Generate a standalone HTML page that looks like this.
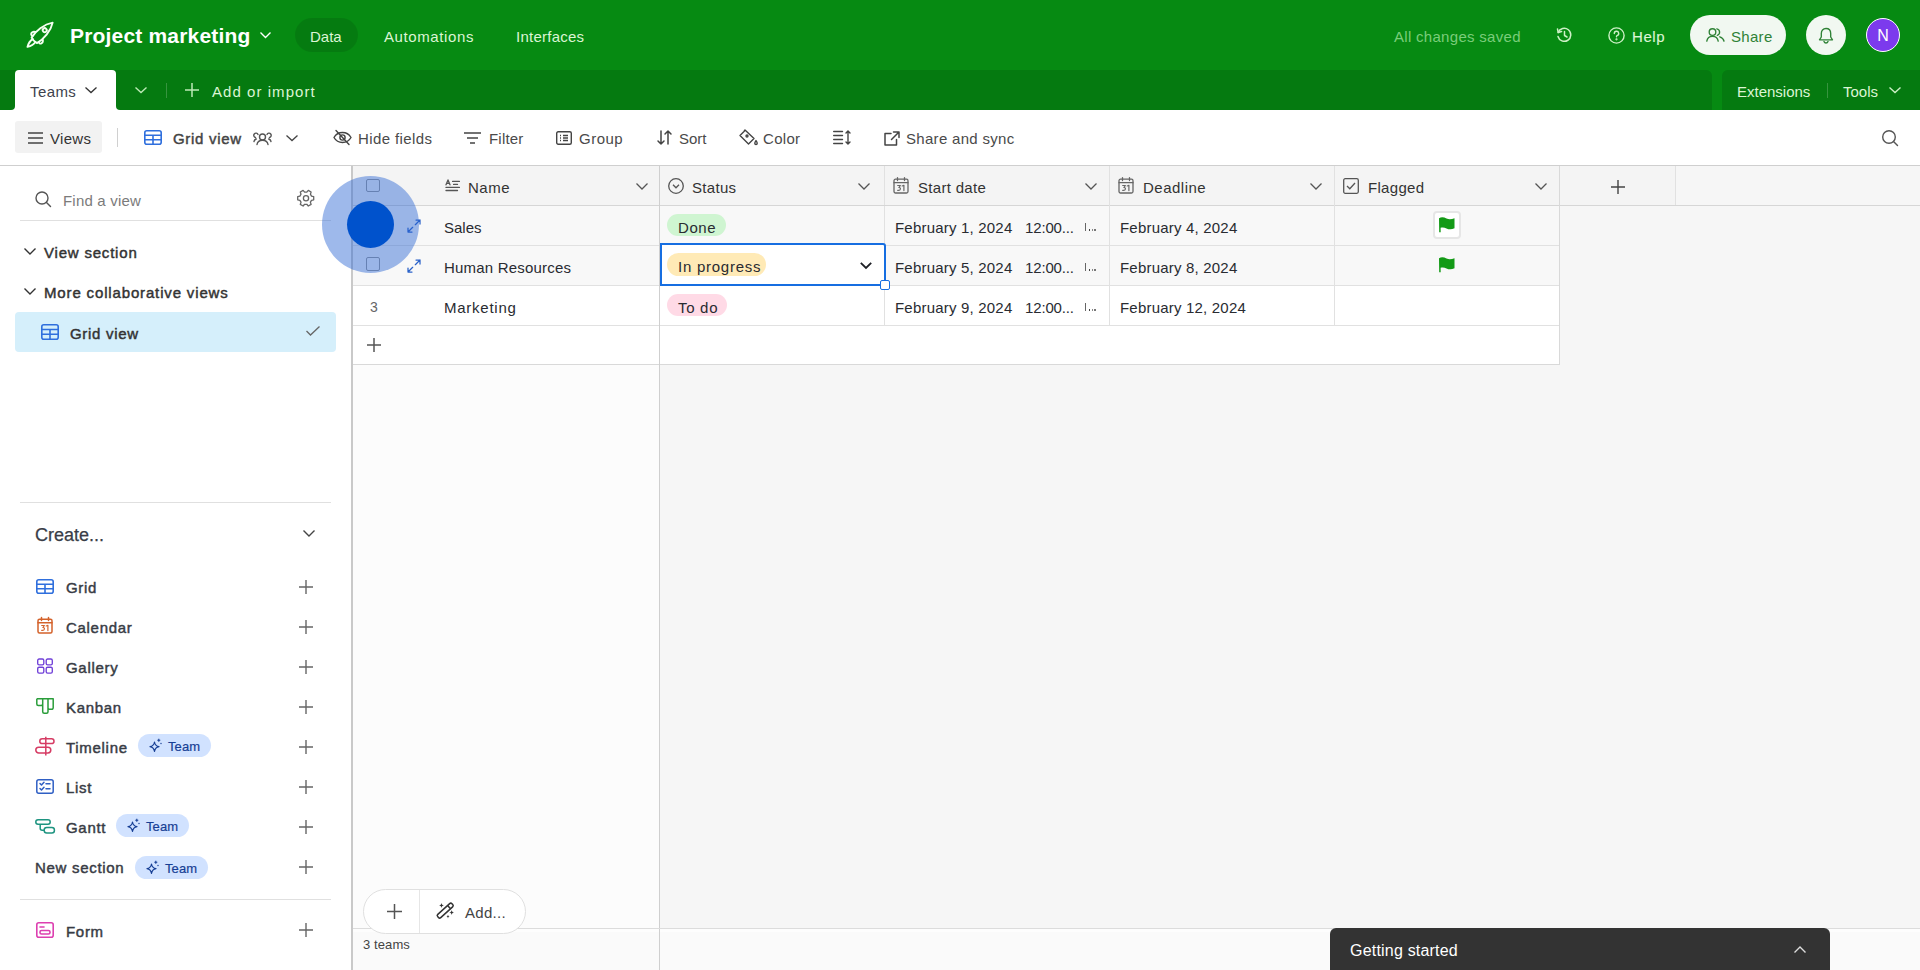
<!DOCTYPE html>
<html><head><meta charset="utf-8">
<style>
*{box-sizing:border-box;margin:0;padding:0}
html,body{width:1920px;height:970px;overflow:hidden;background:#fff;font-family:"Liberation Sans",sans-serif;}
.a{position:absolute}
.t{position:absolute;white-space:nowrap;font-size:15px;line-height:20px}
svg{position:absolute;overflow:visible}
#hdr{left:0;top:0;width:1920px;height:70px;background:#068a12}
.hl{color:#dcf5d4}
.sb{-webkit-text-stroke:0.45px currentColor;letter-spacing:0.7px}
</style></head><body>
<!-- HEADER -->
<div id="hdr" class="a"></div>
<!-- rocket -->
<svg style="left:22px;top:18px" width="36" height="34" viewBox="0 0 36 34" fill="none" stroke="#f4fff0" stroke-width="1.9" stroke-linejoin="round" stroke-linecap="round">
<g transform="translate(12.3 22.3) rotate(-44)">
 <path d="M0 -3.8 C7 -6 18.5 -4.8 25.5 0 C18.5 4.8 7 6 0 3.8 C-0.8 1.5 -0.8 -1.5 0 -3.8 Z"/>
 <circle cx="14.5" cy="0" r="2"/>
 <path d="M1.8 -4.4 C0.6 -7.6 5 -8.4 6.6 -5.2"/>
 <path d="M1.8 4.4 C0.6 7.6 5 8.4 6.6 5.2"/>
 <path d="M-0.3 -2 C-4 -2.8 -7.2 -1.4 -9.5 0 C-7.2 1.4 -4 2.8 -0.3 2"/>
</g>
</svg>
<div class="t" style="left:70px;top:23px;font-size:21px;line-height:26px;font-weight:700;color:#fff;letter-spacing:0.18px">Project marketing</div>
<svg style="left:260px;top:32px" width="11" height="6" viewBox="0 0 11 6" fill="none" stroke="#fff" stroke-width="1.4"><path d="M0.5 0.5 L5.5 5.5 L10.5 0.5"/></svg>
<div class="a" style="left:295px;top:18px;width:63px;height:34px;border-radius:17px;background:rgba(0,0,0,0.1)"></div>
<div class="t hl" style="left:310px;top:27px">Data</div>
<div class="t hl" style="left:384px;top:27px;letter-spacing:0.6px">Automations</div>
<div class="t hl" style="left:516px;top:27px;letter-spacing:0.25px">Interfaces</div>
<div class="t" style="left:1394px;top:27px;color:#7acd7a;letter-spacing:0.3px">All changes saved</div>
<!-- history -->
<svg style="left:1556px;top:27px" width="16" height="16" viewBox="0 0 16 16" fill="none" stroke="#cdf0c6" stroke-width="1.5" stroke-linecap="round" stroke-linejoin="round">
 <path d="M2.2 5.5 A6.5 6.5 0 1 1 2 9.5"/><path d="M1.5 2 L2.2 5.5 L5.6 4.6"/><path d="M8.5 4.5 V8.5 L11 10"/>
</svg>
<!-- help -->
<svg style="left:1608px;top:27px" width="17" height="17" viewBox="0 0 17 17" fill="none" stroke="#cdf0c6" stroke-width="1.4" stroke-linecap="round">
 <circle cx="8.5" cy="8.5" r="7.6"/><path d="M6.3 6.5 A2.2 2.2 0 1 1 9 8.6 C8.6 8.8 8.5 9.1 8.5 9.8"/><circle cx="8.5" cy="12.3" r="0.4" fill="#cdf0c6"/>
</svg>
<div class="t hl" style="left:1632px;top:27px;-webkit-text-stroke:0.15px currentColor;letter-spacing:0.6px">Help</div>
<div class="a" style="left:1690px;top:15px;width:96px;height:40px;border-radius:20px;background:#f1f8f1"></div>
<svg style="left:1706px;top:28px" width="19" height="14" viewBox="0 0 19 14" fill="none" stroke="#2f8236" stroke-width="1.35" stroke-linecap="round" stroke-linejoin="round"><circle cx="6.5" cy="4" r="3.3"/><path d="M0.8 13.2 C1.3 10 3.5 8.3 6.5 8.3 C9.5 8.3 11.7 10 12.2 13.2"/><path d="M10.8 0.9 A3.3 3.3 0 0 1 11.3 7.3"/><path d="M13.8 8.8 C15.8 9.5 17.6 11 18 13.2"/></svg>
<div class="t" style="left:1731px;top:27px;color:#2f8236;letter-spacing:0.3px">Share</div>
<div class="a" style="left:1806px;top:15px;width:40px;height:40px;border-radius:20px;background:#f1f8f1"></div>
<svg style="left:1818px;top:27px" width="16" height="17" viewBox="0 0 16 17" fill="none" stroke="#2f8236" stroke-width="1.35" stroke-linejoin="round" stroke-linecap="round">
 <path d="M8 1.5 C5 1.5 3.3 3.8 3.3 6.5 V10 L1.5 12.8 H14.5 L12.7 10 V6.5 C12.7 3.8 11 1.5 8 1.5 Z"/><path d="M6 14.5 C6.4 15.6 7.1 16 8 16 C8.9 16 9.6 15.6 10 14.5"/>
</svg>
<div class="a" style="left:1866px;top:18px;width:34px;height:34px;border-radius:17px;background:#7c3aed;border:1.5px solid #fff"></div>
<div class="t" style="left:1866px;top:26px;width:34px;text-align:center;color:#fff;font-size:16px">N</div>

<!-- TAB BAR -->
<div class="a" style="left:0;top:70px;width:1920px;height:40px;background:#068a12"></div>
<div class="a" style="left:0;top:100px;width:1712px;height:10px;background:#fff"></div>
<div class="a" style="left:15px;top:70px;width:101px;height:10px;background:#057a10"></div>
<div class="a" style="left:0;top:70px;width:15px;height:40px;background:#057a10;border-bottom-right-radius:4px"></div>
<div class="a" style="left:116px;top:70px;width:1596px;height:40px;background:#057a10;border-bottom-left-radius:4px;border-top-right-radius:6px"></div>
<div class="a" style="left:1722px;top:70px;width:198px;height:40px;background:#057a10;border-top-left-radius:6px"></div>
<div class="a" style="left:15px;top:70px;width:101px;height:40px;background:#fff;border-radius:4px 4px 0 0"></div>
<div class="t" style="left:30px;top:82px;color:#3d424d;letter-spacing:0.4px">Teams</div>
<svg style="left:85px;top:87px" width="12" height="6" viewBox="0 0 12 6" fill="none" stroke="#333" stroke-width="1.3"><path d="M0.5 0.5 L6 5.5 L11.5 0.5"/></svg>
<svg style="left:135px;top:87px" width="12" height="6" viewBox="0 0 12 6" fill="none" stroke="#bdeab6" stroke-width="1.4"><path d="M0.5 0.5 L6 5.5 L11.5 0.5"/></svg>
<div class="a" style="left:166px;top:83px;width:1px;height:15px;background:rgba(255,255,255,0.2)"></div>
<svg style="left:185px;top:83px" width="14" height="14" viewBox="0 0 14 14" fill="none" stroke="#bdeab6" stroke-width="1.5"><path d="M7 0 V14 M0 7 H14"/></svg>
<div class="t hl" style="left:212px;top:82px;letter-spacing:1.05px">Add or import</div>
<div class="t hl" style="left:1737px;top:82px">Extensions</div>
<div class="a" style="left:1827px;top:83px;width:1px;height:15px;background:rgba(255,255,255,0.2)"></div>
<div class="t hl" style="left:1843px;top:82px">Tools</div>
<svg style="left:1889px;top:87px" width="12" height="6" viewBox="0 0 12 6" fill="none" stroke="#cdf0c6" stroke-width="1.4"><path d="M0.5 0.5 L6 5.5 L11.5 0.5"/></svg>

<!-- TOOLBAR -->
<div class="a" style="left:0;top:165px;width:1920px;height:1px;background:#cfcfcf"></div>
<div class="a" style="left:15px;top:121px;width:87px;height:32px;border-radius:3px;background:#f2f2f2"></div>
<svg style="left:28px;top:132px" width="15" height="12" viewBox="0 0 15 12" fill="none" stroke="#444" stroke-width="1.6"><path d="M0 1 H15 M0 6 H15 M0 11 H15"/></svg>
<div class="t" style="left:50px;top:129px;color:#333;letter-spacing:0.3px">Views</div>
<div class="a" style="left:117px;top:128px;width:1px;height:19px;background:#d0d0d0"></div>
<svg style="left:144px;top:130px" width="18" height="15" viewBox="0 0 18 15" fill="none" stroke="#2f6fdd" stroke-width="1.6"><rect x="0.8" y="0.8" width="16.4" height="13.4" rx="2"/><path d="M0.8 5.3 H17.2 M0.8 9.8 H17.2 M9 5.3 V14.2"/></svg>
<div class="t sb" style="left:173px;top:129px;color:#444">Grid view</div>
<svg style="left:253px;top:131px" width="19" height="14" viewBox="0 0 19 14" fill="none" stroke="#555" stroke-width="1.4" stroke-linecap="round"><circle cx="9.5" cy="6" r="3"/><path d="M4 13.5 C4.5 10.5 6.5 9.3 9.5 9.3 C12.5 9.3 14.5 10.5 15 13.5"/><path d="M5 3.5 A2.2 2.2 0 1 0 2.5 6.5 M1 10.5 C1.3 9 2.2 8.3 3.3 8"/><path d="M14 3.5 A2.2 2.2 0 1 1 16.5 6.5 M18 10.5 C17.7 9 16.8 8.3 15.7 8"/></svg>
<svg style="left:286px;top:135px" width="12" height="6" viewBox="0 0 12 6" fill="none" stroke="#444" stroke-width="1.3"><path d="M0.5 0.5 L6 5.5 L11.5 0.5"/></svg>
<svg style="left:333px;top:130px" width="19" height="15" viewBox="0 0 19 15" fill="none" stroke="#444" stroke-width="1.4" stroke-linecap="round"><path d="M1 7.5 C3 4 6 2.5 9.5 2.5 C13 2.5 16 4 18 7.5 C16 11 13 12.5 9.5 12.5 C6 12.5 3 11 1 7.5 Z"/><circle cx="9.5" cy="7.5" r="2.6"/><path d="M3 0.5 L16 14.5"/></svg>
<div class="t" style="left:358px;top:129px;color:#4a4a4a;letter-spacing:0.4px">Hide fields</div>
<svg style="left:464px;top:132px" width="17" height="12" viewBox="0 0 17 12" fill="none" stroke="#444" stroke-width="1.5"><path d="M0 1 H17 M3 6 H14 M6 11 H11"/></svg>
<div class="t" style="left:489px;top:129px;color:#4a4a4a;letter-spacing:0.2px">Filter</div>
<svg style="left:556px;top:131px" width="16" height="14" viewBox="0 0 16 14" fill="none" stroke="#444" stroke-width="1.4"><rect x="0.7" y="0.7" width="14.6" height="12.6" rx="1.5"/><path d="M4 4.5 H5 M4 7 H5 M4 9.5 H5 M7 4.5 H12 M7 7 H12 M7 9.5 H12"/></svg>
<div class="t" style="left:579px;top:129px;color:#4a4a4a;letter-spacing:0.5px">Group</div>
<svg style="left:657px;top:130px" width="15" height="15" viewBox="0 0 15 15" fill="none" stroke="#444" stroke-width="1.5" stroke-linecap="round" stroke-linejoin="round"><path d="M4 1 V14 M1 11 L4 14 L7 11 M11 14 V1 M8 4 L11 1 L14 4"/></svg>
<div class="t" style="left:679px;top:129px;color:#4a4a4a">Sort</div>
<svg style="left:739px;top:129px" width="19" height="17" viewBox="0 0 19 17" fill="none" stroke="#444" stroke-width="1.4" stroke-linejoin="round"><path d="M6 1 L15 9.5 L9.5 15 L1 6.5 L5 2.5 Z"/><circle cx="8" cy="7" r="1"/><path d="M17 11.5 C17.8 12.8 18.2 13.5 18.2 14.3 A1.2 1.2 0 0 1 15.8 14.3 C15.8 13.5 16.2 12.8 17 11.5 Z"/></svg>
<div class="t" style="left:763px;top:129px;color:#4a4a4a;letter-spacing:0.3px">Color</div>
<svg style="left:833px;top:130px" width="18" height="15" viewBox="0 0 18 15" fill="none" stroke="#444" stroke-width="1.4" stroke-linecap="round"><path d="M0.7 1.5 H9.5 M0.7 5.5 H9.5 M0.7 9.5 H9.5 M0.7 13.5 H9.5 M15 1 V14 M13 3 L15 1 L17 3 M13 12 L15 14 L17 12"/></svg>
<svg style="left:884px;top:131px" width="16" height="15" viewBox="0 0 16 15" fill="none" stroke="#444" stroke-width="1.5" stroke-linecap="round" stroke-linejoin="round"><path d="M7 2.5 H1 V14 H12.5 V8.5"/><path d="M9.5 1 H15 V6.5 M15 1 L7.5 8.5"/></svg>
<div class="t" style="left:906px;top:129px;color:#4a4a4a;letter-spacing:0.3px">Share and sync</div>
<svg style="left:1882px;top:130px" width="17" height="17" viewBox="0 0 17 17" fill="none" stroke="#555" stroke-width="1.4" stroke-linecap="round"><circle cx="7" cy="7" r="6.3"/><path d="M11.5 11.5 L15.5 15.5"/></svg>


<!-- SIDEBAR -->
<div class="a" style="left:351px;top:166px;width:2px;height:804px;background:#c9c9c9"></div>
<svg style="left:35px;top:191px" width="17" height="16" viewBox="0 0 17 16" fill="none" stroke="#555" stroke-width="1.4" stroke-linecap="round"><circle cx="7" cy="7" r="6"/><path d="M11.5 11.5 L15.5 15.5"/></svg>
<div class="t" style="left:63px;top:191px;color:#7b7b7b;letter-spacing:0.2px">Find a view</div>
<svg style="left:297px;top:190px" width="18" height="17" viewBox="0 0 18 17" fill="none" stroke="#666" stroke-width="1.3" stroke-linejoin="round"><g transform="rotate(90 9 8.2)"><path d="M7.4 1 H10.6 L11.1 3.2 L13 4.3 L15.2 3.6 L16.8 6.4 L15.1 7.9 V10.1 L16.8 11.6 L15.2 14.4 L13 13.7 L11.1 14.8 L10.6 17 H7.4 L6.9 14.8 L5 13.7 L2.8 14.4 L1.2 11.6 L2.9 10.1 V7.9 L1.2 6.4 L2.8 3.6 L5 4.3 L6.9 3.2 Z" transform="translate(0,-0.5)"/></g><circle cx="9" cy="8.2" r="2.6"/></svg>
<div class="a" style="left:20px;top:220px;width:311px;height:1px;background:#e0e0e0"></div>
<svg style="left:24px;top:248px" width="12" height="7" viewBox="0 0 12 7" fill="none" stroke="#333" stroke-width="1.4"><path d="M0.5 0.5 L6 6 L11.5 0.5"/></svg>
<div class="t sb" style="left:44px;top:243px;color:#333;letter-spacing:0.8px">View section</div>
<svg style="left:24px;top:288px" width="12" height="7" viewBox="0 0 12 7" fill="none" stroke="#333" stroke-width="1.4"><path d="M0.5 0.5 L6 6 L11.5 0.5"/></svg>
<div class="t sb" style="left:44px;top:283px;color:#333;letter-spacing:0.85px">More collaborative views</div>
<div class="a" style="left:15px;top:312px;width:321px;height:40px;border-radius:4px;background:#d5effb"></div>
<svg style="left:41px;top:324px" width="18" height="16" viewBox="0 0 18 16" fill="none" stroke="#2f6fdd" stroke-width="1.6"><rect x="0.8" y="0.8" width="16.4" height="14.4" rx="2"/><path d="M0.8 5.5 H17.2 M0.8 10.3 H17.2 M9 5.5 V15.2"/></svg>
<div class="t sb" style="left:70px;top:324px;color:#333">Grid view</div>
<svg style="left:306px;top:326px" width="14" height="10" viewBox="0 0 14 10" fill="none" stroke="#666" stroke-width="1.3"><path d="M0.5 5 L4.5 9 L13.5 0.5"/></svg>
<div class="a" style="left:20px;top:502px;width:311px;height:1px;background:#e0e0e0"></div>
<div class="t" style="left:35px;top:524px;color:#393d47;font-size:18px;line-height:22px;-webkit-text-stroke:0.25px currentColor">Create...</div>
<svg style="left:303px;top:530px" width="12" height="7" viewBox="0 0 12 7" fill="none" stroke="#444" stroke-width="1.4"><path d="M0.5 0.5 L6 6 L11.5 0.5"/></svg>
<svg style="left:36px;top:579px" width="18" height="15" viewBox="0 0 18 15" fill="none" stroke="#2f6fdd" stroke-width="1.6"><rect x="0.8" y="0.8" width="16.4" height="13.4" rx="2"/><path d="M0.8 5.3 H17.2 M0.8 9.8 H17.2 M9 5.3 V14.2"/></svg><div class="t sb" style="left:66px;top:578px;color:#383c45">Grid</div><svg style="left:299px;top:580px" width="14" height="14" viewBox="0 0 14 14" fill="none" stroke="#666" stroke-width="1.4"><path d="M7 0 V14 M0 7 H14"/></svg>
<svg style="left:37px;top:617px" width="16" height="17" viewBox="0 0 16 17" fill="none" stroke="#d4622b" stroke-width="1.5" stroke-linejoin="round" stroke-linecap="round"><rect x="1" y="2.2" width="14" height="13.8" rx="1.5"/><path d="M1 5.7 H15 M4.5 0.6 V3.5 M11.5 0.6 V3.5"/><path d="M4.7 8.5 H7.4 L5.9 10.5 C8 10.3 8.2 13.7 4.7 13.3 M9.2 9 L10.9 8.3 V13.6" stroke-width="1.2"/></svg><div class="t sb" style="left:66px;top:618px;color:#383c45">Calendar</div><svg style="left:299px;top:620px" width="14" height="14" viewBox="0 0 14 14" fill="none" stroke="#666" stroke-width="1.4"><path d="M7 0 V14 M0 7 H14"/></svg>
<svg style="left:37px;top:658px" width="16" height="16" viewBox="0 0 16 16" fill="none" stroke="#7040d8" stroke-width="1.35"><rect x="0.7" y="1" width="6.1" height="5.9" rx="1.4"/><rect x="9.2" y="1" width="6.1" height="5.9" rx="1.4"/><rect x="0.7" y="9.2" width="6.1" height="5.9" rx="1.4"/><rect x="9.2" y="9.2" width="6.1" height="5.9" rx="1.4"/></svg><div class="t sb" style="left:66px;top:658px;color:#383c45">Gallery</div><svg style="left:299px;top:660px" width="14" height="14" viewBox="0 0 14 14" fill="none" stroke="#666" stroke-width="1.4"><path d="M7 0 V14 M0 7 H14"/></svg>
<svg style="left:36px;top:698px" width="18" height="16" viewBox="0 0 18 16" fill="none" stroke="#2a9d3a" stroke-width="1.5" stroke-linejoin="round"><path d="M0.8 0.8 H17.2 V9.8 A1.5 1.5 0 0 1 15.7 11.3 H13.5 A1.5 1.5 0 0 1 12 9.8 V0.8 M6.7 0.8 V6 A1.5 1.5 0 0 1 5.2 7.5 H2.3 A1.5 1.5 0 0 1 0.8 6 V0.8 M6.7 0.8 V13.7 A1.5 1.5 0 0 0 8.2 15.2 H10.5 A1.5 1.5 0 0 0 12 13.7 V0.8"/></svg><div class="t sb" style="left:66px;top:698px;color:#383c45">Kanban</div><svg style="left:299px;top:700px" width="14" height="14" viewBox="0 0 14 14" fill="none" stroke="#666" stroke-width="1.4"><path d="M7 0 V14 M0 7 H14"/></svg>
<svg style="left:35px;top:737px" width="20" height="19" viewBox="0 0 20 19" fill="none" stroke="#d63c64" stroke-width="1.5" stroke-linejoin="round"><rect x="4.8" y="1.8" width="14.2" height="4.8" rx="2.4"/><rect x="0.8" y="10.2" width="15" height="5.8" rx="2.9"/><path d="M10.8 -0.3 V18.6"/></svg><div class="t sb" style="left:66px;top:738px;color:#383c45">Timeline</div><svg style="left:299px;top:740px" width="14" height="14" viewBox="0 0 14 14" fill="none" stroke="#666" stroke-width="1.4"><path d="M7 0 V14 M0 7 H14"/></svg>
<svg style="left:36px;top:779px" width="18" height="15" viewBox="0 0 18 15" fill="none" stroke="#2f5fc4" stroke-width="1.5" stroke-linecap="round" stroke-linejoin="round"><rect x="0.8" y="0.8" width="16.4" height="13.4" rx="2"/><path d="M4 4.5 L5.5 6 L8 3.2 M4 9.5 L5.5 11 L8 8.2 M10 4.8 H14 M10 9.8 H14"/></svg><div class="t sb" style="left:66px;top:778px;color:#383c45">List</div><svg style="left:299px;top:780px" width="14" height="14" viewBox="0 0 14 14" fill="none" stroke="#666" stroke-width="1.4"><path d="M7 0 V14 M0 7 H14"/></svg>
<svg style="left:35px;top:819px" width="20" height="15" viewBox="0 0 20 15" fill="none" stroke="#1e9480" stroke-width="1.5"><rect x="0.8" y="0.8" width="14.4" height="4.4" rx="2.2"/><rect x="9.2" y="8.4" width="10.2" height="5.6" rx="2.5"/><path d="M5.2 5.2 V9.2 A2 2 0 0 0 7.2 11.2 H9.2"/></svg><div class="t sb" style="left:66px;top:818px;color:#383c45">Gantt</div><svg style="left:299px;top:820px" width="14" height="14" viewBox="0 0 14 14" fill="none" stroke="#666" stroke-width="1.4"><path d="M7 0 V14 M0 7 H14"/></svg>
<div class="a" style="left:138px;top:734px;width:73px;height:23px;border-radius:12px;background:#d1e2ff"></div><svg style="left:149px;top:739px" width="14" height="14" viewBox="0 0 14 14" fill="none" stroke="#173f95" stroke-width="1.2" stroke-linejoin="round"><path d="M5.5 3 C6 6 7 7.2 10 7.7 C7 8.2 6 9.4 5.5 12.5 C5 9.4 4 8.2 1 7.7 C4 7.2 5 6 5.5 3 Z"/><path d="M9.8 -0.2 V2.8 M8.3 1.3 H11.3" stroke-width="1.1"/><circle cx="12" cy="4.5" r="0.7" fill="#173f95" stroke="none"/></svg><div class="t" style="left:168px;top:737px;font-size:13px;line-height:19px;color:#173f95;letter-spacing:0.1px;-webkit-text-stroke:0.2px currentColor">Team</div><div class="a" style="left:116px;top:814px;width:73px;height:23px;border-radius:12px;background:#d1e2ff"></div><svg style="left:127px;top:819px" width="14" height="14" viewBox="0 0 14 14" fill="none" stroke="#173f95" stroke-width="1.2" stroke-linejoin="round"><path d="M5.5 3 C6 6 7 7.2 10 7.7 C7 8.2 6 9.4 5.5 12.5 C5 9.4 4 8.2 1 7.7 C4 7.2 5 6 5.5 3 Z"/><path d="M9.8 -0.2 V2.8 M8.3 1.3 H11.3" stroke-width="1.1"/><circle cx="12" cy="4.5" r="0.7" fill="#173f95" stroke="none"/></svg><div class="t" style="left:146px;top:817px;font-size:13px;line-height:19px;color:#173f95;letter-spacing:0.1px;-webkit-text-stroke:0.2px currentColor">Team</div><div class="t sb" style="left:35px;top:858px;color:#383c45">New section</div><div class="a" style="left:135px;top:856px;width:73px;height:23px;border-radius:12px;background:#d1e2ff"></div><svg style="left:146px;top:861px" width="14" height="14" viewBox="0 0 14 14" fill="none" stroke="#173f95" stroke-width="1.2" stroke-linejoin="round"><path d="M5.5 3 C6 6 7 7.2 10 7.7 C7 8.2 6 9.4 5.5 12.5 C5 9.4 4 8.2 1 7.7 C4 7.2 5 6 5.5 3 Z"/><path d="M9.8 -0.2 V2.8 M8.3 1.3 H11.3" stroke-width="1.1"/><circle cx="12" cy="4.5" r="0.7" fill="#173f95" stroke="none"/></svg><div class="t" style="left:165px;top:859px;font-size:13px;line-height:19px;color:#173f95;letter-spacing:0.1px;-webkit-text-stroke:0.2px currentColor">Team</div><svg style="left:299px;top:860px" width="14" height="14" viewBox="0 0 14 14" fill="none" stroke="#666" stroke-width="1.4"><path d="M7 0 V14 M0 7 H14"/></svg>
<div class="a" style="left:20px;top:899px;width:311px;height:1px;background:#e0e0e0"></div>
<svg style="left:36px;top:922px" width="18" height="16" viewBox="0 0 18 16" fill="none" stroke="#dd3fb0" stroke-width="1.6" stroke-linecap="round"><rect x="0.8" y="0.8" width="16.4" height="14.4" rx="2"/><path d="M4 5 H8"/><rect x="4" y="8.5" width="10" height="3.5" rx="1.5"/></svg><div class="t sb" style="left:66px;top:922px;color:#383c45">Form</div><svg style="left:299px;top:923px" width="14" height="14" viewBox="0 0 14 14" fill="none" stroke="#666" stroke-width="1.4"><path d="M7 0 V14 M0 7 H14"/></svg>


<!-- GRID -->
<div class="a" style="left:353px;top:166px;width:1567px;height:804px;background:#f6f6f6"></div>
<div class="a" style="left:353px;top:166px;width:306px;height:804px;background:#fcfcfc"></div>
<div class="a" style="left:353px;top:929px;width:1567px;height:41px;background:#fafafa"></div><div class="a" style="left:353px;top:929px;width:1567px;height:3px;background:#fdfdfd"></div>
<div class="a" style="left:353px;top:166px;width:1322px;height:39px;background:#f4f4f4"></div>
<div class="a" style="left:353px;top:205px;width:1567px;height:1px;background:#d6d6d6"></div>
<div class="a" style="left:353px;top:206px;width:1206px;height:79px;background:#f8f8f8"></div>
<div class="a" style="left:353px;top:286px;width:1206px;height:78px;background:#fff"></div>
<div class="a" style="left:353px;top:245px;width:1206px;height:1px;background:#e1e1e1"></div>
<div class="a" style="left:353px;top:285px;width:1206px;height:1px;background:#e1e1e1"></div>
<div class="a" style="left:353px;top:325px;width:1206px;height:1px;background:#e1e1e1"></div>
<div class="a" style="left:353px;top:364px;width:1206px;height:1px;background:#d9d9d9"></div>
<div class="a" style="left:659px;top:166px;width:1px;height:804px;background:#cfcfcf"></div>
<div class="a" style="left:884px;top:166px;width:1px;height:159px;background:#e1e1e1"></div>
<div class="a" style="left:1109px;top:166px;width:1px;height:159px;background:#e1e1e1"></div>
<div class="a" style="left:1334px;top:166px;width:1px;height:159px;background:#e1e1e1"></div>
<div class="a" style="left:1559px;top:166px;width:1px;height:199px;background:#d9d9d9"></div>
<div class="a" style="left:1675px;top:166px;width:1px;height:39px;background:#e1e1e1"></div>
<div class="a" style="left:884px;top:205px;width:1px;height:1px;background:#d6d6d6"></div>
<div class="a" style="left:353px;top:928px;width:1567px;height:1px;background:#dcdcdc"></div>

<!-- header cells -->
<div class="a" style="left:366px;top:179px;width:14px;height:13px;border:1.5px solid #9a9a9a;border-radius:2px"></div>
<svg style="left:445px;top:179px" width="15" height="13" viewBox="0 0 15 13" fill="none" stroke="#555" stroke-width="1.3" stroke-linecap="round"><path d="M1 5.8 L3 0.9 L5 5.8 M1.7 4.3 H4.3" stroke-linejoin="round"/><path d="M7.6 2.4 H14.4 M8.6 5.4 H12.5 M1 8.4 H14.4 M1 11.5 H12.5"/></svg>
<div class="t" style="left:468px;top:178px;color:#333;letter-spacing:0.5px">Name</div>
<svg style="left:636px;top:183px" width="12" height="7" viewBox="0 0 12 7" fill="none" stroke="#555" stroke-width="1.3"><path d="M0.5 0.5 L6 6 L11.5 0.5"/></svg>
<svg style="left:668px;top:178px" width="16" height="16" viewBox="0 0 16 16" fill="none" stroke="#555" stroke-width="1.3"><circle cx="8" cy="8" r="7.3"/><path d="M5 6.8 L8 9.8 L11 6.8"/></svg>
<div class="t" style="left:692px;top:178px;color:#333;letter-spacing:0.3px">Status</div>
<svg style="left:858px;top:183px" width="12" height="7" viewBox="0 0 12 7" fill="none" stroke="#555" stroke-width="1.3"><path d="M0.5 0.5 L6 6 L11.5 0.5"/></svg>
<svg style="left:893px;top:177px" width="16" height="17" viewBox="0 0 16 17" fill="none" stroke="#666" stroke-width="1.3" stroke-linejoin="round" stroke-linecap="round"><rect x="1" y="2.2" width="14" height="13.8" rx="1.5"/><path d="M1 5.7 H15 M4.5 0.6 V3.5 M11.5 0.6 V3.5"/><path d="M4.7 8.5 H7.4 L5.9 10.5 C8 10.3 8.2 13.7 4.7 13.3 M9.2 9 L10.9 8.3 V13.6" stroke-width="1.2"/></svg>
<div class="t" style="left:918px;top:178px;color:#333;letter-spacing:0.3px">Start date</div>
<svg style="left:1085px;top:183px" width="12" height="7" viewBox="0 0 12 7" fill="none" stroke="#555" stroke-width="1.3"><path d="M0.5 0.5 L6 6 L11.5 0.5"/></svg>
<svg style="left:1118px;top:177px" width="16" height="17" viewBox="0 0 16 17" fill="none" stroke="#666" stroke-width="1.3" stroke-linejoin="round" stroke-linecap="round"><rect x="1" y="2.2" width="14" height="13.8" rx="1.5"/><path d="M1 5.7 H15 M4.5 0.6 V3.5 M11.5 0.6 V3.5"/><path d="M4.7 8.5 H7.4 L5.9 10.5 C8 10.3 8.2 13.7 4.7 13.3 M9.2 9 L10.9 8.3 V13.6" stroke-width="1.2"/></svg>
<div class="t" style="left:1143px;top:178px;color:#333;letter-spacing:0.5px">Deadline</div>
<svg style="left:1310px;top:183px" width="12" height="7" viewBox="0 0 12 7" fill="none" stroke="#555" stroke-width="1.3"><path d="M0.5 0.5 L6 6 L11.5 0.5"/></svg>
<svg style="left:1343px;top:178px" width="16" height="16" viewBox="0 0 16 16" fill="none" stroke="#555" stroke-width="1.3"><rect x="0.7" y="0.7" width="14.6" height="14.6" rx="1.5"/><path d="M4 8 L6.8 10.8 L12 5"/></svg>
<div class="t" style="left:1368px;top:178px;color:#333;letter-spacing:0.3px">Flagged</div>
<svg style="left:1535px;top:183px" width="12" height="7" viewBox="0 0 12 7" fill="none" stroke="#555" stroke-width="1.3"><path d="M0.5 0.5 L6 6 L11.5 0.5"/></svg>
<svg style="left:1611px;top:180px" width="14" height="14" viewBox="0 0 14 14" fill="none" stroke="#444" stroke-width="1.4"><path d="M7 0 V14 M0 7 H14"/></svg>
<!-- rows -->
<svg style="left:407px;top:219px" width="14" height="14" viewBox="0 0 14 14" fill="none" stroke="#2a62c9" stroke-width="1.25" stroke-linecap="round" stroke-linejoin="round"><path d="M9 1 H13 V5 M13 1 L8.3 5.7 M5 13 H1 V9 M1 13 L5.7 8.3"/></svg>
<div class="t" style="left:444px;top:218px;color:#292b31">Sales</div>
<div class="a" style="left:366px;top:257px;width:14px;height:14px;border:1.5px solid #9a9a9a;border-radius:2px"></div>
<svg style="left:407px;top:259px" width="14" height="14" viewBox="0 0 14 14" fill="none" stroke="#2a62c9" stroke-width="1.25" stroke-linecap="round" stroke-linejoin="round"><path d="M9 1 H13 V5 M13 1 L8.3 5.7 M5 13 H1 V9 M1 13 L5.7 8.3"/></svg>
<div class="t" style="left:444px;top:258px;color:#292b31;letter-spacing:0.2px">Human Resources</div>
<div class="t" style="left:370px;top:298px;color:#666;font-size:14px;line-height:18px">3</div>
<div class="t" style="left:444px;top:298px;color:#292b31;letter-spacing:0.75px">Marketing</div>
<svg style="left:367px;top:338px" width="14" height="14" viewBox="0 0 14 14" fill="none" stroke="#555" stroke-width="1.5"><path d="M7 0 V14 M0 7 H14"/></svg>
<!-- status -->
<div class="a" style="left:667px;top:214px;width:59px;height:22px;border-radius:11px;background:#cff5d1"></div>
<div class="t" style="left:678px;top:219px;color:#292b31;line-height:18px;letter-spacing:0.6px">Done</div>
<div class="a" style="left:660px;top:243px;width:226px;height:43px;border:2px solid #166ee1;border-radius:0 3px 0 0;background:#fff"></div>
<div class="a" style="left:667px;top:253px;width:99px;height:23px;border-radius:11.5px;background:#ffeab6"></div>
<div class="t" style="left:678px;top:258px;color:#292b31;line-height:18px;letter-spacing:0.75px">In progress</div>
<svg style="left:860px;top:262px" width="12" height="7" viewBox="0 0 12 7" fill="none" stroke="#1d1f25" stroke-width="1.8"><path d="M0.8 0.8 L6 6 L11.2 0.8"/></svg>
<div class="a" style="left:880px;top:280px;width:10px;height:10px;border:1.5px solid #166ee1;border-radius:2px;background:#fff"></div>
<div class="a" style="left:667px;top:294px;width:60px;height:22px;border-radius:11px;background:#ffdae6"></div>
<div class="t" style="left:678px;top:299px;color:#292b31;line-height:18px;letter-spacing:0.7px">To do</div>
<!-- dates -->
<div class="t" style="left:895px;top:218px;color:#292b31;letter-spacing:0.2px">February 1, 2024</div><div class="t" style="left:1025px;top:218px;color:#292b31;letter-spacing:-0.15px">12:00...</div><div class="a" style="left:1085px;top:223px;width:1.3px;height:8px;background:#666"></div><div class="a" style="left:1089px;top:229px;width:1.4px;height:2px;background:#444"></div><div class="a" style="left:1091.6px;top:229px;width:1.4px;height:2px;background:#888"></div><div class="a" style="left:1094.2px;top:229px;width:1.4px;height:2px;background:#777"></div><div class="t" style="left:1120px;top:218px;color:#292b31;letter-spacing:0.2px">February 4, 2024</div>
<div class="t" style="left:895px;top:258px;color:#292b31;letter-spacing:0.2px">February 5, 2024</div><div class="t" style="left:1025px;top:258px;color:#292b31;letter-spacing:-0.15px">12:00...</div><div class="a" style="left:1085px;top:263px;width:1.3px;height:8px;background:#666"></div><div class="a" style="left:1089px;top:269px;width:1.4px;height:2px;background:#444"></div><div class="a" style="left:1091.6px;top:269px;width:1.4px;height:2px;background:#888"></div><div class="a" style="left:1094.2px;top:269px;width:1.4px;height:2px;background:#777"></div><div class="t" style="left:1120px;top:258px;color:#292b31;letter-spacing:0.2px">February 8, 2024</div>
<div class="t" style="left:895px;top:298px;color:#292b31;letter-spacing:0.2px">February 9, 2024</div><div class="t" style="left:1025px;top:298px;color:#292b31;letter-spacing:-0.15px">12:00...</div><div class="a" style="left:1085px;top:303px;width:1.3px;height:8px;background:#666"></div><div class="a" style="left:1089px;top:309px;width:1.4px;height:2px;background:#444"></div><div class="a" style="left:1091.6px;top:309px;width:1.4px;height:2px;background:#888"></div><div class="a" style="left:1094.2px;top:309px;width:1.4px;height:2px;background:#777"></div><div class="t" style="left:1120px;top:298px;color:#292b31;letter-spacing:0.2px">February 12, 2024</div>
<div class="a" style="left:1433px;top:211px;width:28px;height:28px;border:2px solid #e6e6e6;border-radius:4px;background:#fff"></div>
<svg style="left:1439px;top:217px" width="17" height="16" viewBox="0 0 17 16" fill="#139a16"><path d="M0 1.2 C2.5 -0.4 5 0.2 7.5 1.4 C10 2.6 12.5 2.2 15.5 1.2 V11.2 C12.5 12.8 10 12.6 7.5 11.4 C5.5 10.4 3.5 10.2 1.6 10.8 L1.7 15.2 H0.2 Z"/></svg>
<svg style="left:1439px;top:257px" width="17" height="16" viewBox="0 0 17 16" fill="#139a16"><path d="M0 1.2 C2.5 -0.4 5 0.2 7.5 1.4 C10 2.6 12.5 2.2 15.5 1.2 V11.2 C12.5 12.8 10 12.6 7.5 11.4 C5.5 10.4 3.5 10.2 1.6 10.8 L1.7 15.2 H0.2 Z"/></svg>
<!-- footer -->
<div class="a" style="left:363px;top:889px;width:163px;height:45px;border:1px solid #e0e0e0;border-radius:23px;background:#fff"></div>
<div class="a" style="left:419px;top:890px;width:1px;height:43px;background:#e6e6e6"></div>
<svg style="left:387px;top:904px" width="15" height="15" viewBox="0 0 15 15" fill="none" stroke="#555" stroke-width="1.5"><path d="M7.5 0 V15 M0 7.5 H15"/></svg>
<svg style="left:430px;top:898px" width="30" height="26" viewBox="0 0 30 26" fill="none" stroke="#333" stroke-width="1.5" stroke-linejoin="round"><g transform="translate(15.2 12.6) rotate(-42)"><rect x="-9.6" y="-2.2" width="19.2" height="4.4" rx="1.6"/><path d="M5.2 -2.2 V2.2"/></g><path d="M11.5 5.1 C12.028 6.9719999999999995 12.028 6.9719999999999995 13.9 7.5 C12.028 8.028 12.028 8.028 11.5 9.9 C10.972 8.028 10.972 8.028 9.1 7.5 C10.972 6.9719999999999995 10.972 6.9719999999999995 11.5 5.1 Z M21.7 12.1 C22.25 14.049999999999999 22.25 14.049999999999999 24.2 14.6 C22.25 15.15 22.25 15.15 21.7 17.1 C21.15 15.15 21.15 15.15 19.2 14.6 C21.15 14.049999999999999 21.15 14.049999999999999 21.7 12.1 Z M18 16.700000000000003 C18.418 18.182000000000002 18.418 18.182000000000002 19.9 18.6 C18.418 19.018 18.418 19.018 18 20.5 C17.582 19.018 17.582 19.018 16.1 18.6 C17.582 18.182000000000002 17.582 18.182000000000002 18 16.700000000000003 Z" fill="#333" stroke="none"/></svg>
<div class="t" style="left:465px;top:903px;color:#444;letter-spacing:0.3px">Add...</div>
<div class="t" style="left:363px;top:936px;color:#444;font-size:13px;line-height:18px;letter-spacing:0.1px">3 teams</div>
<div class="a" style="left:1330px;top:928px;width:500px;height:42px;background:#333;border-radius:6px 6px 0 0"></div>
<div class="t" style="left:1350px;top:941px;color:#fff;font-size:16px;line-height:20px;letter-spacing:0.2px">Getting started</div>
<svg style="left:1794px;top:946px" width="12" height="7" viewBox="0 0 12 7" fill="none" stroke="#ddd" stroke-width="1.4"><path d="M0.5 6.5 L6 1 L11.5 6.5"/></svg>
<!-- click overlay -->
<div class="a" style="left:322px;top:176px;width:97px;height:97px;border-radius:50%;background:rgba(40,100,210,0.45)"></div>
<div class="a" style="left:347px;top:201px;width:47px;height:47px;border-radius:50%;background:#0052cc"></div>

</body></html>
